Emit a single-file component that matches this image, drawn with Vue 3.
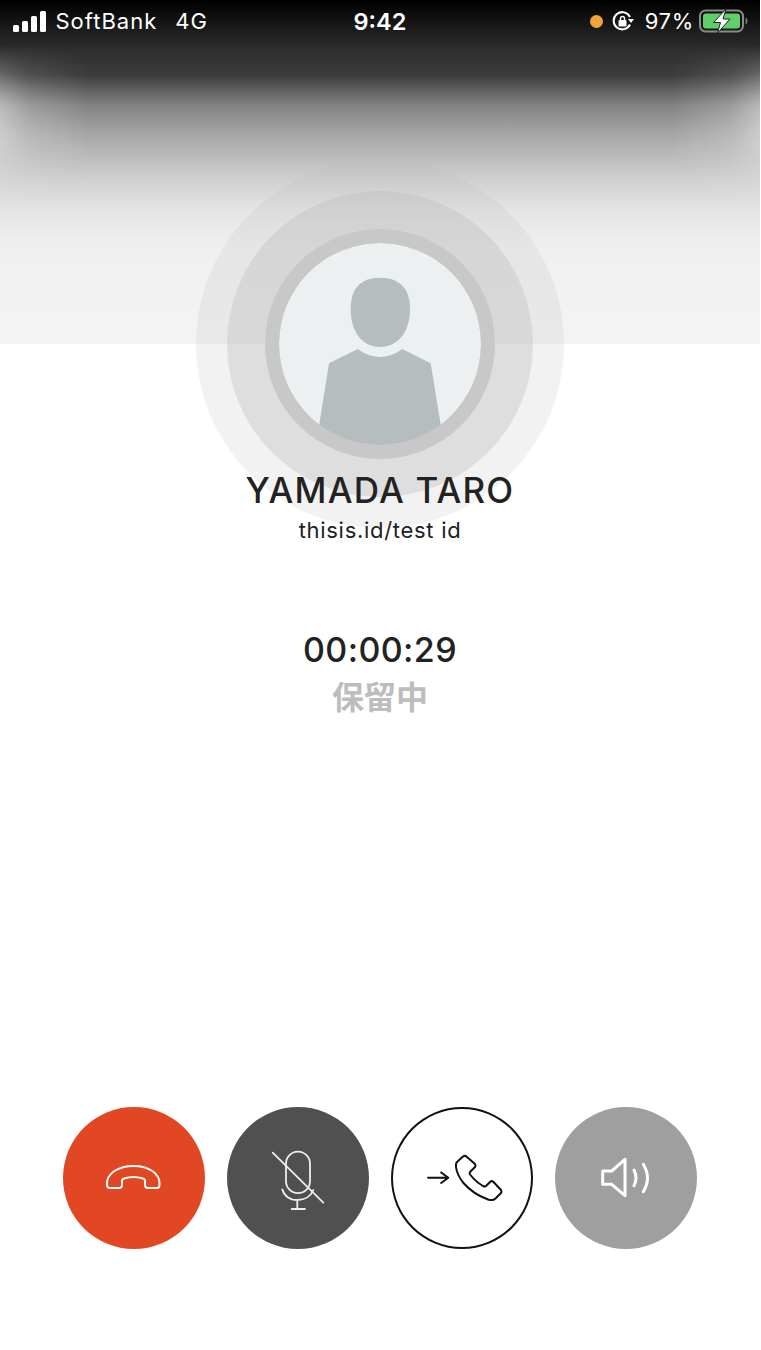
<template>
  <div class="page">
    <header class="hero">
      <div class="status-bar">
        <div class="status-left">
          <div class="signal">
            <span v-for="h in signalBars" :key="h" class="bar" :style="{ height: h + 'px' }"></span>
          </div>
          <span class="carrier">SoftBank</span>
          <span class="network">4G</span>
        </div>
        <div class="clock">9:42</div>
        <div class="status-right">
          <span class="dot"></span>
          <svg class="lock" width="24" height="22" viewBox="0 0 24 22">
            <path d="M19 14.500A8.600 8.600 0 1 1 19 7" fill="none" stroke="#fff" stroke-width="2" />
            <path d="M17 9h6l-3 4z" fill="#fff" />
            <rect x="7.500" y="10" width="8" height="6.500" rx="1" fill="#fff" />
            <path d="M9.500 10V8.500a2 2 0 0 1 4 0V10" fill="none" stroke="#fff" stroke-width="1.400" />
          </svg>
          <span class="percent">97%</span>
          <svg class="battery" width="49" height="24" viewBox="0 0 49 24">
            <rect x="1" y="1.500" width="43" height="21" rx="5.500" fill="none" stroke="#8a8a8a" stroke-width="2" />
            <rect x="4" y="4.500" width="37" height="15" rx="3" fill="#5fcf6a" />
            <path d="M46.500 8.500c1.500.5 2 2 2 3.500s-.5 3-2 3.500z" fill="#777" />
            <path d="M27 0L14.500 13.500h7L18.500 24 31 10h-7z" fill="#fff" stroke="#222" stroke-width="1" />
          </svg>
        </div>
      </div>
      <div class="avatar-rings">
        <div class="ring ring-outer"></div>
        <div class="ring ring-mid"></div>
        <div class="ring ring-inner">
          <svg class="avatar" width="202" height="202" viewBox="0 0 202 202">
            <circle cx="101" cy="101" r="101" fill="#ecf0f1" />
            <path d="M101 34.700C121 34.700 131 46 131 66C131 90 118 104 101 104C84 104 71.700 90 71.700 66C71.700 46 81 34.700 101 34.700Z" fill="#b5bdbe" />
            <path d="M78.700 106Q101 122 123.300 106L151.700 120.300L165 202H37L50 120.300Z" fill="#b5bdbe" />
          </svg>
        </div>
      </div>
    </header>

    <main class="call">
      <h1 class="name">YAMADA TARO</h1>
      <p class="user-id">thisis.id/test id</p>
      <p class="timer">00:00:29</p>
      <p class="state">保留中</p>
    </main>

    <div class="actions">
      <button class="action hangup">
        <svg width="142" height="142" viewBox="0 0 142 142" fill="none" stroke="#fff" stroke-width="2">
          <path d="M44 78C43 66 56 59 70.500 59C85 59 97.500 66 96.500 78Q96.500 81 94 81H85Q82 81 82 78V74Q82 72 80 71.500Q70.500 68.500 61 71.500Q59 72 59 74V78Q59 81 56 81H47Q44 81 44 78Z" />
        </svg>
      </button>
      <button class="action mute">
        <svg width="142" height="142" viewBox="0 0 142 142" fill="none" stroke="#eee" stroke-width="1.800" stroke-linecap="round">
          <rect x="59" y="44.700" width="24" height="41.500" rx="12" />
          <path d="M55.300 82.300C57 89 63 93 70.300 93C78 93 84 89 86.300 83" />
          <path d="M70.300 93V102M64.700 102H78" />
          <path d="M45.700 45.700L96.300 95.700" />
        </svg>
      </button>
      <button class="action transfer">
        <svg width="142" height="142" viewBox="0 0 142 142" fill="none" stroke="#111" stroke-width="2" stroke-linejoin="round">
          <path d="M36.300 70.700H57.300M49.500 65L57.300 70.700L49.500 76.500" />
          <path d="M72 49.500Q74 48 76 50L84 57Q85 59 84 60L79 65Q78 66 79 67.500Q85 75 92 79Q94 80 95 79L99.500 74.500Q101 73.500 102.500 75L110 83Q111 85 110 86L104.500 91.500Q102 94 97 92.500Q82 87 72.500 76Q66 68 65 60Q64.500 56 66.500 54.500Z" />
        </svg>
      </button>
      <button class="action speaker">
        <svg width="142" height="142" viewBox="0 0 142 142" fill="none" stroke="#fff" stroke-width="3" stroke-linecap="round" stroke-linejoin="round">
          <path d="M47.700 64V77.300H56.700L70 88.700V52.300L56.700 64Z" />
          <path d="M79 63Q83 71 79 78.700" />
          <path d="M88.300 57.300Q96.700 71 88.300 84.700" />
        </svg>
      </button>
    </div>
  </div>
</template>

<script setup>
const signalBars = [7, 11, 16, 21];
</script>

<style scoped>
.page {
  width: 760px;
  height: 1350px;
  background: #fff;
  display: flex;
  flex-direction: column;
  font-family: Inter, "Liberation Sans", "Noto Sans CJK JP", sans-serif;
  overflow: hidden;
}

.hero {
  position: relative;
  height: 344px;
  flex-shrink: 0;
  background: linear-gradient(
    180deg,
    #000 0,
    #1c1c1c 30px,
    #2e2e2e 50px,
    #3c3c3c 75px,
    #5f5f5f 90px,
    #808180 105px,
    #a0a1a0 130px,
    #b4b5b4 150px,
    #cfd0cf 180px,
    #e4e5e4 210px,
    #f0f0f0 250px,
    #f4f4f4 344px
  );
}

.hero::before {
  content: "";
  position: absolute;
  inset: 0;
  background: linear-gradient(
    90deg,
    rgba(235, 235, 235, 0.55),
    rgba(235, 235, 235, 0.25) 30px,
    rgba(235, 235, 235, 0) 90px,
    rgba(235, 235, 235, 0) 670px,
    rgba(235, 235, 235, 0.25) 730px,
    rgba(235, 235, 235, 0.55)
  );
  -webkit-mask-image: linear-gradient(180deg, transparent 45px, #000 110px, #000 140px, transparent 210px);
  mask-image: linear-gradient(180deg, transparent 45px, #000 110px, #000 140px, transparent 210px);
}

.status-bar {
  position: relative;
  z-index: 2;
  height: 42px;
  display: grid;
  grid-template-columns: 1fr auto 1fr;
  align-items: center;
  padding: 0 13px;
  color: #fff;
  font-size: 22px;
}

.status-left {
  display: flex;
  align-items: center;
}

.signal {
  display: flex;
  align-items: flex-end;
  gap: 3.500px;
  height: 21px;
  margin-right: 10px;
}

.bar {
  width: 5.500px;
  background: #fff;
  border-radius: 1.500px;
}

.carrier,
.network {
  letter-spacing: 1px;
}

.network {
  margin-left: 18px;
}

.clock {
  font-weight: 600;
  font-size: 23.500px;
}

.status-right {
  display: flex;
  align-items: center;
  justify-content: flex-end;
}

.dot {
  width: 13px;
  height: 13px;
  border-radius: 50%;
  background: #f2a33c;
  margin-right: 8px;
}

.lock {
  margin-right: 10px;
}

.percent {
  margin-right: 5px;
  letter-spacing: 0.7px;
}

.battery {
  margin-right: -1px;
}

.avatar-rings {
  position: absolute;
  left: 380px;
  top: 344px;
  z-index: 1;
}

.ring {
  position: absolute;
  border-radius: 50%;
  transform: translate(-50%, -50%);
}

.ring-outer {
  width: 368px;
  height: 368px;
  background: rgba(190, 190, 190, 0.2);
}

.ring-mid {
  width: 306px;
  height: 306px;
  background: rgba(190, 190, 190, 0.38);
}

.ring-inner {
  width: 230px;
  height: 230px;
  background: #c8c8c8;
  display: flex;
  align-items: center;
  justify-content: center;
}

.avatar {
  display: block;
  border-radius: 50%;
}

.call {
  position: relative;
  z-index: 2;
  display: flex;
  flex-direction: column;
  align-items: center;
  padding-top: 125px;
  color: #222;
}

.name {
  margin: 0;
  font-size: 35px;
  line-height: 42px;
  font-weight: 500;
  letter-spacing: 1.200px;
}

.user-id {
  margin: 0;
  padding-top: 4px;
  font-size: 22px;
  line-height: 30px;
  letter-spacing: 0.7px;
}

.timer {
  margin: 0;
  padding-top: 84px;
  font-size: 34px;
  line-height: 42px;
  font-weight: 500;
  letter-spacing: 0.4px;
}

.state {
  margin: 0;
  padding-top: 1px;
  font-size: 32px;
  line-height: 46px;
  font-weight: 700;
  color: #bdbdbd;
  font-family: "Noto Sans CJK JP", sans-serif;
}

.actions {
  margin-top: auto;
  display: flex;
  justify-content: center;
  gap: 22px;
  padding-bottom: 101px;
}

.action {
  width: 142px;
  height: 142px;
  padding: 0;
  border: none;
  border-radius: 50%;
  display: block;
}

.action svg {
  display: block;
}

.hangup {
  background: #e04722;
}

.mute {
  background: #505050;
}

.transfer {
  background: #fff;
  box-shadow: inset 0 0 0 2px #111;
}

.speaker {
  background: #9f9f9f;
}
</style>
